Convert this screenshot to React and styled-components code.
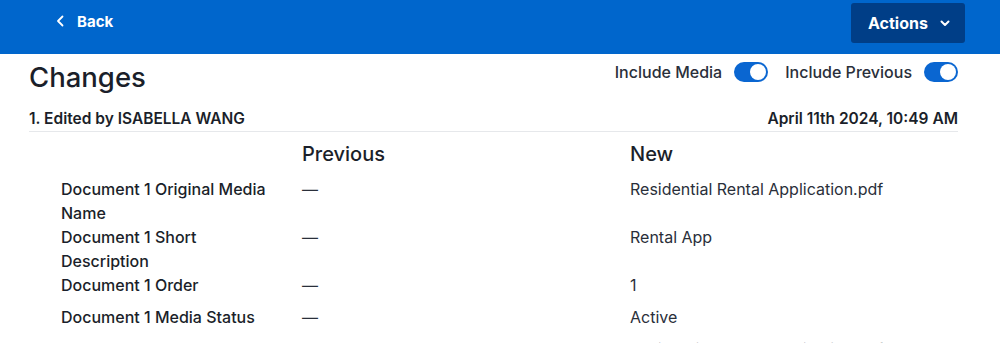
import styled, { createGlobalStyle } from "styled-components"

const GlobalStyle = createGlobalStyle`
    body {
        margin: 0;
        font-family: Inter, "Noto Sans", "Liberation Sans", sans-serif;
        color: #1b1f2a;
        background: #ffffff;
    }
`

const rows = [
    { label: "Document 1 Original Media Name", previous: "—", next: "Residential Rental Application.pdf" },
    { label: "Document 1 Short Description", previous: "—", next: "Rental App" },
    { label: "Document 1 Order", previous: "—", next: "1" },
    { label: "Document 1 Media Status", previous: "—", next: "Active" },
    { label: "Document 1 Media Name", previous: "—", next: "Residential Rental Application.pdf" },
]

function App() {
    return (
        <Page>
            <GlobalStyle />
            <TopBar>
                <BackLink>
                    <svg width="9" height="12" viewBox="0 0 9 12" fill="none">
                        <path d="M6.5 1.5L2 6l4.5 4.5" stroke="#fff" strokeWidth="1.8" strokeLinecap="round" strokeLinejoin="round" />
                    </svg>
                    Back
                </BackLink>
                <ActionsButton>
                    Actions
                    <svg width="10" height="7" viewBox="0 0 10 7" fill="none">
                        <path d="M1.5 1.5L5 5l3.5-3.5" stroke="#fff" strokeWidth="2" strokeLinecap="round" strokeLinejoin="round" />
                    </svg>
                </ActionsButton>
            </TopBar>
            <Content>
                <TitleRow>
                    <Title>Changes</Title>
                    <Toggles>
                        <ToggleLabel>
                            Include Media
                            <Switch on />
                        </ToggleLabel>
                        <ToggleLabel>
                            Include Previous
                            <Switch on />
                        </ToggleLabel>
                    </Toggles>
                </TitleRow>
                <EditRow>
                    <span>1. Edited by ISABELLA WANG</span>
                    <span>April 11th 2024, 10:49 AM</span>
                </EditRow>
                <Table>
                    <HeadCell />
                    <HeadCell>Previous</HeadCell>
                    <HeadCell>New</HeadCell>
                    {rows.map((row) => (
                        <Row key={row.label}>
                            <LabelCell>{row.label}</LabelCell>
                            <ValueCell>{row.previous}</ValueCell>
                            <ValueCell>{row.next}</ValueCell>
                        </Row>
                    ))}
                </Table>
            </Content>
        </Page>
    )
}

const Page = styled.div`
    width: 1000px;
    height: 343px;
    overflow: hidden;
    background: #fff;
`

const TopBar = styled.header`
    display: flex;
    justify-content: space-between;
    align-items: flex-start;
    height: 54px;
    box-sizing: border-box;
    padding: 3px 35px 0 56px;
    background-color: #0066cc;
`

const BackLink = styled.a`
    display: flex;
    align-items: center;
    gap: 12px;
    height: 36px;
    color: #fff;
    font-size: 15px;
    font-weight: 700;
    cursor: pointer;
`

const ActionsButton = styled.button`
    display: flex;
    align-items: center;
    gap: 12px;
    height: 40px;
    width: 114px;
    padding: 0 0 0 17px;
    border: none;
    border-radius: 3px;
    background-color: #003e87;
    color: #fff;
    font-family: inherit;
    font-size: 16px;
    font-weight: 700;
    cursor: pointer;
`

const Content = styled.main`
    padding: 3px 42px 0 29px;
`

const TitleRow = styled.div`
    display: flex;
    justify-content: space-between;
    align-items: flex-start;
    height: 50px;
`

const Title = styled.h1`
    margin: 0;
    font-size: 27.5px;
    font-weight: 500;
    line-height: 40px;
`

const Toggles = styled.div`
    display: flex;
    gap: 17px;
    margin-top: 5px;
`

const ToggleLabel = styled.label`
    display: flex;
    align-items: center;
    gap: 12px;
    font-size: 16px;
    font-weight: 500;
    color: #2a2f3a;
`

const Switch = styled.span`
    position: relative;
    width: 34px;
    height: 20px;
    border-radius: 10px;
    background-color: ${props => props.on ? "#0a66d1" : "#c4c8cf"};
    &::after {
        content: "";
        position: absolute;
        top: 2px;
        left: ${props => props.on ? "16px" : "2px"};
        width: 16px;
        height: 16px;
        border-radius: 50%;
        background: #fff;
    }
`

const EditRow = styled.div`
    display: flex;
    justify-content: space-between;
    line-height: 24px;
    font-size: 15.5px;
    font-weight: 600;
    border-bottom: 1px solid #e6e8eb;
`

const Table = styled.div`
    display: grid;
    grid-template-columns: 273px 328px 1fr;
`

const HeadCell = styled.div`
    padding: 10px 0 11px;
    line-height: 24px;
    font-size: 20px;
    font-weight: 500;
`

const Row = styled.div`
    display: contents;
`

const LabelCell = styled.div`
    min-height: 32px;
    padding: 0 23px 0 32px;
    line-height: 24px;
    font-size: 16px;
    font-weight: 500;
`

const ValueCell = styled.div`
    min-height: 32px;
    line-height: 24px;
    font-size: 16px;
    color: #2a2f3a;
`

export default App
